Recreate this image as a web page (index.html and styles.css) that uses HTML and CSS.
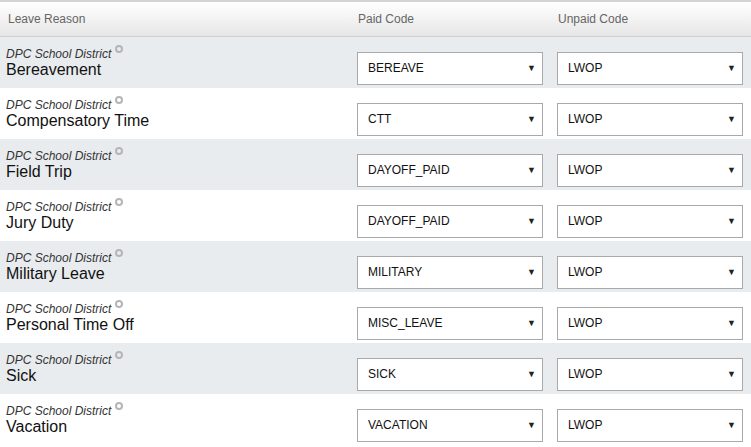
FILE: index.html
```html
<!DOCTYPE html>
<html lang="en">
<head>
    <meta charset="UTF-8">
    <title>Leave Reasons</title>
    <link rel="stylesheet" href="styles.css">
</head>
<body>
<table class="codes">
    <thead>
        <tr>
            <th class="col-reason">Leave Reason</th>
            <th class="col-paid">Paid Code</th>
            <th class="col-unpaid">Unpaid Code</th>
        </tr>
    </thead>
    <tbody>
        <tr>
            <td><div class="district">DPC School District <span class="dot"></span></div><div class="reason">Bereavement</div></td>
            <td><div class="select">BEREAVE<span class="arrow">&#9660;</span></div></td>
            <td><div class="select">LWOP<span class="arrow">&#9660;</span></div></td>
        </tr>
        <tr>
            <td><div class="district">DPC School District <span class="dot"></span></div><div class="reason">Compensatory Time</div></td>
            <td><div class="select">CTT<span class="arrow">&#9660;</span></div></td>
            <td><div class="select">LWOP<span class="arrow">&#9660;</span></div></td>
        </tr>
        <tr>
            <td><div class="district">DPC School District <span class="dot"></span></div><div class="reason">Field Trip</div></td>
            <td><div class="select">DAYOFF_PAID<span class="arrow">&#9660;</span></div></td>
            <td><div class="select">LWOP<span class="arrow">&#9660;</span></div></td>
        </tr>
        <tr>
            <td><div class="district">DPC School District <span class="dot"></span></div><div class="reason">Jury Duty</div></td>
            <td><div class="select">DAYOFF_PAID<span class="arrow">&#9660;</span></div></td>
            <td><div class="select">LWOP<span class="arrow">&#9660;</span></div></td>
        </tr>
        <tr>
            <td><div class="district">DPC School District <span class="dot"></span></div><div class="reason">Military Leave</div></td>
            <td><div class="select">MILITARY<span class="arrow">&#9660;</span></div></td>
            <td><div class="select">LWOP<span class="arrow">&#9660;</span></div></td>
        </tr>
        <tr>
            <td><div class="district">DPC School District <span class="dot"></span></div><div class="reason">Personal Time Off</div></td>
            <td><div class="select">MISC_LEAVE<span class="arrow">&#9660;</span></div></td>
            <td><div class="select">LWOP<span class="arrow">&#9660;</span></div></td>
        </tr>
        <tr>
            <td><div class="district">DPC School District <span class="dot"></span></div><div class="reason">Sick</div></td>
            <td><div class="select">SICK<span class="arrow">&#9660;</span></div></td>
            <td><div class="select">LWOP<span class="arrow">&#9660;</span></div></td>
        </tr>
        <tr>
            <td><div class="district">DPC School District <span class="dot"></span></div><div class="reason">Vacation</div></td>
            <td><div class="select">VACATION<span class="arrow">&#9660;</span></div></td>
            <td><div class="select">LWOP<span class="arrow">&#9660;</span></div></td>
        </tr>
    </tbody>
</table>
</body>
</html>
```

FILE: styles.css
```css
body {
    margin: 0;
    font-family: "Liberation Sans", Arial, sans-serif;
    background-color: #ffffff;
}

.codes {
    width: 100%;
    border-collapse: collapse;
    table-layout: fixed;
}

.codes th {
    height: 34px;
    padding: 0 0 0 8px;
    text-align: left;
    font-weight: normal;
    font-size: 12px;
    color: #666666;
    border-top: 2px solid #d4d4d4;
    border-bottom: 1px solid #d0d0d0;
    background: linear-gradient(to bottom, #ffffff, #e6e6e6);
    vertical-align: middle;
}

.col-reason {
    width: 342px;
}

.col-paid {
    width: 192px;
}

.codes td {
    height: 51px;
    padding: 0 0 0 6px;
    vertical-align: top;
}

.codes td + td {
    height: 36px;
    padding: 15px 0 0 7px;
}

.codes tbody tr:nth-child(odd) {
    background-color: #e9ecef;
}

.district {
    margin-top: 8px;
    font-size: 12px;
    font-style: italic;
    color: #333333;
    line-height: 14px;
}

.dot {
    display: inline-block;
    width: 4px;
    height: 4px;
    border: 2px solid #b5b5b5;
    border-radius: 50%;
    vertical-align: 5px;
}

.reason {
    font-size: 16px;
    color: #111111;
    line-height: 18px;
}

.select {
    position: relative;
    box-sizing: border-box;
    width: 186px;
    height: 33px;
    padding-left: 10px;
    line-height: 31px;
    font-size: 12px;
    color: #111111;
    background-color: #ffffff;
    border: 1px solid #a9a9a9;
}

.arrow {
    position: absolute;
    right: 6px;
    top: 0;
    font-size: 9px;
    color: #222222;
}
```
